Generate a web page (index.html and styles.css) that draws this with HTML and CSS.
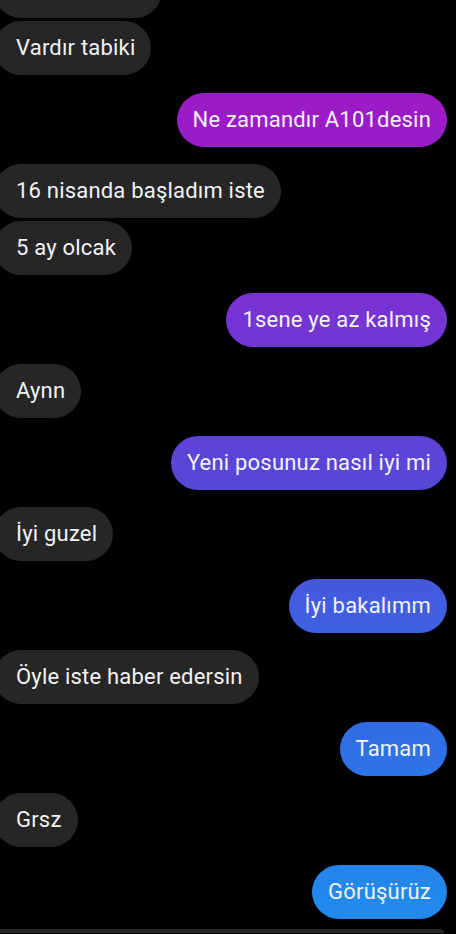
FILE: index.html
```html
<!DOCTYPE html>
<html lang="tr">
<head>
    <meta charset="UTF-8">
    <meta name="viewport" content="width=device-width, initial-scale=1.0">
    <title>Sohbet</title>
    <link rel="stylesheet" href="styles.css">
</head>
<body>
    <!-- Mesaj listesi -->
    <main class="sohbet">
        <div class="satir gelen ust-kesik"><div class="balon">&nbsp;</div></div>
        <div class="satir gelen ayni"><div class="balon">Vardır tabiki</div></div>
        <div class="satir giden"><div class="balon">Ne zamandır A101desin</div></div>
        <div class="satir gelen"><div class="balon">16 nisanda başladım iste</div></div>
        <div class="satir gelen ayni"><div class="balon">5 ay olcak</div></div>
        <div class="satir giden"><div class="balon">1sene ye az kalmış</div></div>
        <div class="satir gelen"><div class="balon">Aynn</div></div>
        <div class="satir giden"><div class="balon">Yeni posunuz nasıl iyi mi</div></div>
        <div class="satir gelen"><div class="balon">İyi guzel</div></div>
        <div class="satir giden"><div class="balon">İyi bakalımm</div></div>
        <div class="satir gelen"><div class="balon">Öyle iste haber edersin</div></div>
        <div class="satir giden"><div class="balon">Tamam</div></div>
        <div class="satir gelen"><div class="balon">Grsz</div></div>
        <div class="satir giden"><div class="balon">Görüşürüz</div></div>
        <div class="satir gelen alt-kesik"><div class="balon"></div></div>
    </main>
</body>
</html>
```

FILE: styles.css
```css
/* Basis stijlen */
html, body {
    margin: 0;
    padding: 0;
    background-color: #000;
    height: 934px;
    overflow: hidden;
}

body {
    font-family: Roboto, "Noto Sans", Arial, sans-serif;
    color: #f2f2f2;
}

.sohbet {
    display: flex;
    flex-direction: column;
    padding-right: 9px;
}

.satir {
    display: flex;
    margin-top: 17.5px;
}

.satir.ayni {
    margin-top: 3px;
}

.gelen {
    justify-content: flex-start;
}

.giden {
    justify-content: flex-end;
}

.balon {
    height: 54px;
    line-height: 54px;
    font-size: 22px;
    letter-spacing: 0.2px;
    padding: 0 16px;
    border-radius: 27px;
    white-space: nowrap;
}

.gelen .balon {
    background-color: #262626;
    margin-left: -6px;
    padding-left: 22px;
}

/* verloop over het hele scherm, zoals in Messenger */
.giden .balon {
    background-image: linear-gradient(180deg,
        #a518c4 0%,
        #9a1cc6 12.8%,
        #7634d4 34.3%,
        #5a45d6 49.6%,
        #415ddf 64.9%,
        #2f70e5 80.2%,
        #2288ee 95.5%,
        #1f8cf0 100%);
    background-attachment: fixed;
}

.ust-kesik {
    margin-top: -36px;
}

.ust-kesik .balon {
    width: 130px;
}

.alt-kesik {
    margin-top: 10.5px;
}

.alt-kesik .balon {
    width: 412px;
    height: 4px;
    border-radius: 4px 8px 0 0;
}
```
